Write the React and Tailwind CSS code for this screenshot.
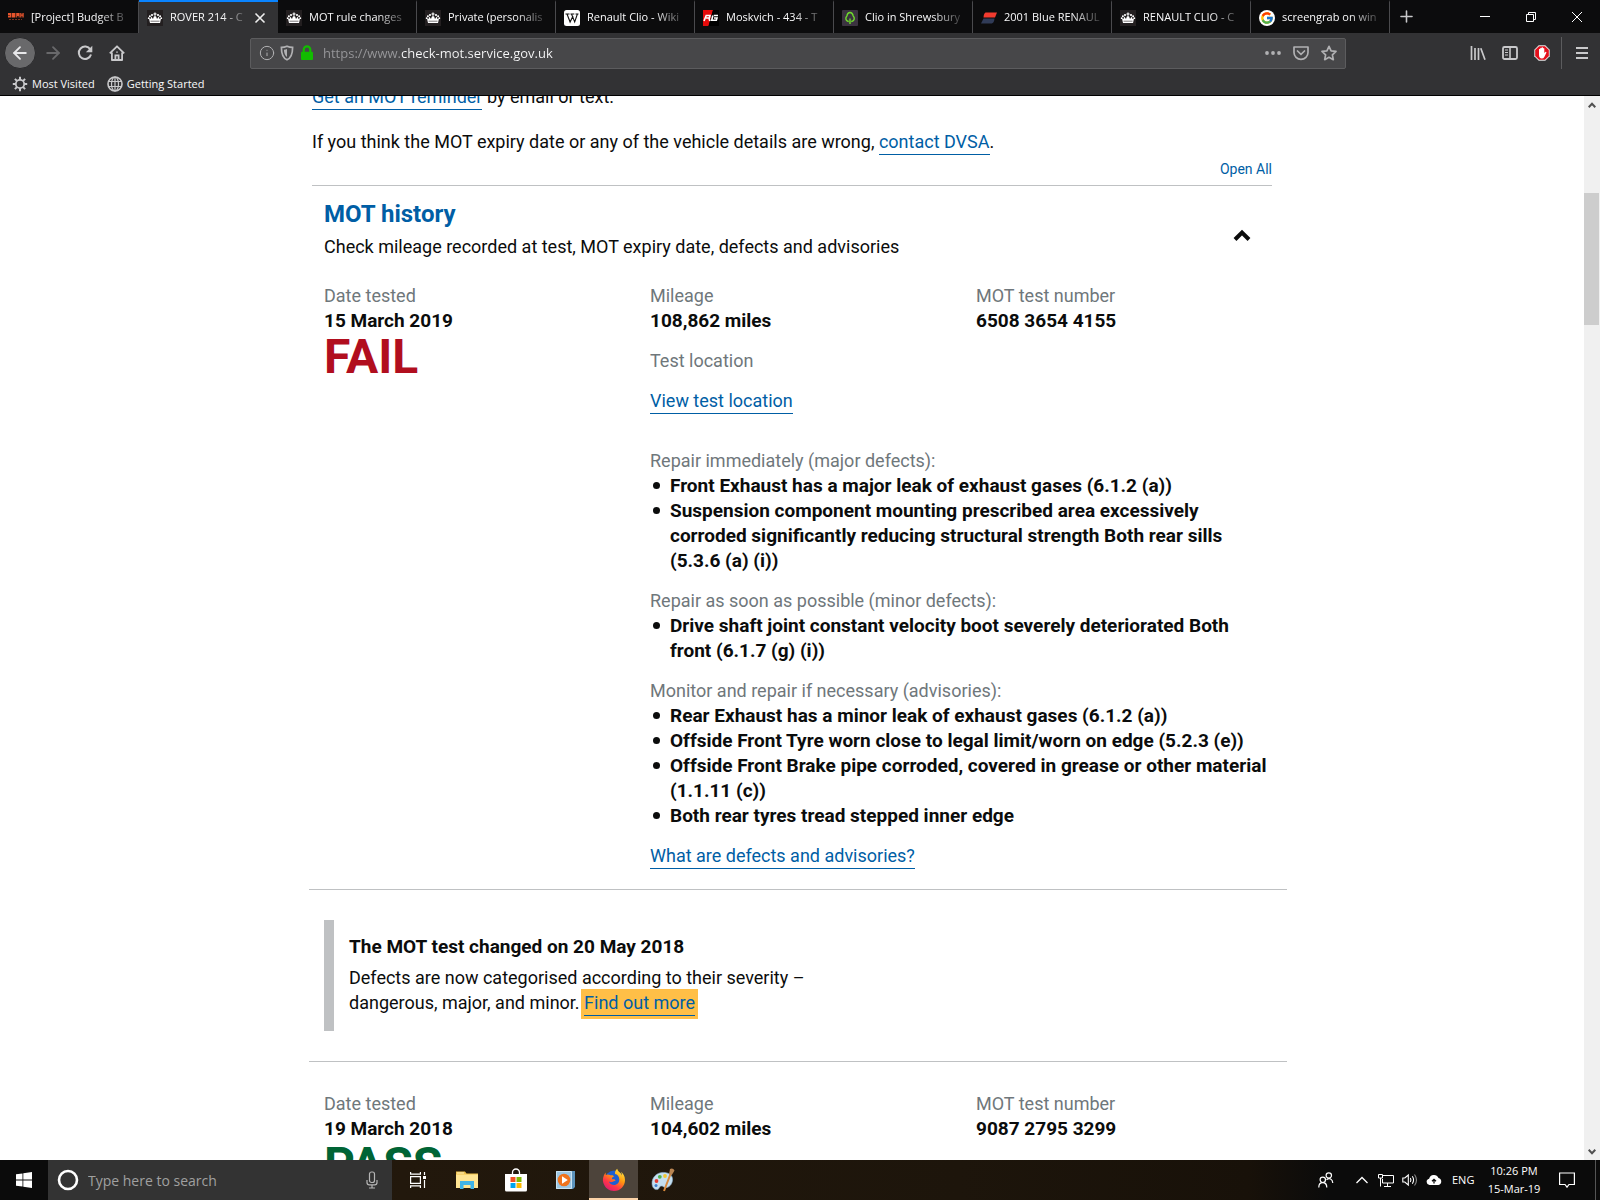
import { ArrowLeft, ArrowRight, Plus, Info } from 'lucide-react';
import { FcGoogle } from 'react-icons/fc';

const CrownIcon = () => (
	<svg viewBox="0 0 16 16" className="w-4 h-4 shrink-0">
		<path fill="#231f20" d="M0 0h16v16H0z" />
		<g fill="#fff">
			<path d="M7.4 2.6h1.2v1h1v1h-1v1.2H7.4V4.6h-1v-1h1z" />
			<circle cx="5" cy="5" r="1.100" />
			<circle cx="11" cy="5" r="1.100" />
			<circle cx="2.900" cy="6.200" r="1" />
			<circle cx="13.100" cy="6.200" r="1" />
			<circle cx="1.700" cy="8.200" r=".9" />
			<circle cx="14.300" cy="8.200" r=".9" />
			<path d="M2 8.400 3.600 9l.5-2.600L6 9l1-2.800h2L10 9l1.900-2.600.5 2.600 1.600-.6-1 4.600H3z" />
		</g>
		<path stroke="#231f20" strokeWidth=".6" d="M3.500 11.200h9" />
	</svg>
);

const ProjectIcon = () => (
	<svg viewBox="0 0 16 16" className="w-4 h-4 shrink-0">
		<g fill="#e8552d">
			<path d="M0 3h3.4v4.5H0V6h2v-.5H0zM4 3h3.4v4.5H4zM8.2 3h3.4v4.5h-1V6H9.2v1.5h-1zM12.2 3h1.2v1.6h1V3h1.300v4.500h-1.300V5.800h-1v1.700h-1.200z" />
		</g>
		<path stroke="#7a3320" strokeWidth="1" strokeDasharray="2 1" d="M1 9.500h13" />
	</svg>
);

const WikiIcon = () => (
	<svg viewBox="0 0 16 16" className="w-4 h-4 shrink-0">
		<rect width="16" height="16" rx="2.500" fill="#fff" />
		<path d="M1.500 4h4M6.500 4h3.800M11.500 4h3M3 4l3.100 8L9 6M7.500 4l3.200 8L13.400 4" fill="none" stroke="#111" strokeWidth="1.100" />
	</svg>
);

const MoskvichIcon = () => (
	<svg viewBox="0 0 16 16" className="w-4 h-4 shrink-0">
		<path fill="#e60b0b" d="M0 0h10L5.500 16H0z" />
		<path fill="#000" d="M10 0h6v16H5.500z" />
		<path d="m1 11 2.200-5.500H7L6.400 8H3M6 8l.8 3M10.800 5.500H15M9.800 5.500 8.700 10.300h4.600L14 8h-3" fill="none" stroke="#fff" strokeWidth="1.600" />
	</svg>
);

const TreeIcon = () => (
	<svg viewBox="0 0 16 16" className="w-4 h-4 shrink-0">
		<rect width="16" height="16" rx="1" fill="#3b3340" />
		<path d="M8 14V8.500M6.800 11.500c-2-.4-3.300-1.800-2.900-3.600.2-1 .8-1.300 1-2C5.300 3.700 6.400 2.500 8 2.500s2.700 1.200 3.200 3.400c.2.7.8 1 1 2 .4 1.800-.9 3.200-3 3.600" fill="none" stroke="#6fdc2c" strokeWidth="1.400" />
	</svg>
);

const FlagIcon = () => (
	<svg viewBox="0 0 16 16" className="w-4 h-4 shrink-0">
		<path fill="#f23b2f" d="M4.500 2.500H16L14 7.500H2.500q.2-4 2-5z" />
		<path fill="#303b57" d="M2.500 8.500H13.500q-.4 4.500-2.800 5H0z" />
	</svg>
);

const tabs = [
	{ title: '[Project] Budget B', icon: <ProjectIcon /> },
	{ title: 'ROVER 214 - C', icon: <CrownIcon />, active: true },
	{ title: 'MOT rule changes', icon: <CrownIcon /> },
	{ title: 'Private (personalis', icon: <CrownIcon /> },
	{ title: 'Renault Clio - Wiki', icon: <WikiIcon /> },
	{ title: 'Moskvich - 434 - T', icon: <MoskvichIcon /> },
	{ title: 'Clio in Shrewsbury', icon: <TreeIcon /> },
	{ title: '2001 Blue RENAUL', icon: <FlagIcon /> },
	{ title: 'RENAULT CLIO - C', icon: <CrownIcon /> },
	{ title: 'screengrab on win', icon: <span className="w-4 h-4 shrink-0 rounded-full bg-white flex items-center justify-center"><FcGoogle size={ 14 } /></span> },
];

function TabStrip() {
	return (
		<div className="flex h-[33px] bg-[#0c0c0d]">
			{ tabs.map( ( tab ) => (
				<div
					key={ tab.title }
					className={ tab.active
						? 'flex items-center w-[139px] min-w-0 border-t-2 border-[#0a84ff] bg-[#323234] pl-2 pr-2'
						: 'flex items-center w-[139px] min-w-0 border-t-2 border-t-transparent border-r border-r-[#4a4a4d] pl-2 pr-1' }
				>
					<button type="button" className="flex flex-1 min-w-0 items-center gap-[7px] text-left">
						{ tab.icon }
						<span className="flex-1 min-w-0 overflow-hidden whitespace-nowrap text-[11px] font-[Open_Sans,sans-serif] text-[#f9f9fa] mask-r-from-65%">{ tab.title }</span>
					</button>
					{ tab.active && (
						<button type="button" aria-label="Close tab" className="w-5 h-5 flex items-center justify-center">
							<svg viewBox="0 0 12 12" className="w-3 h-3"><path d="m1.500 1.500 9 9M10.500 1.500l-9 9" stroke="#eee" strokeWidth="1.600" /></svg>
						</button>
					) }
				</div>
			) ) }
			<button type="button" aria-label="New tab" className="w-8 flex items-center justify-center text-[#c8c8ca]">
				<Plus size={ 19 } strokeWidth={ 2 } />
			</button>
			<div className="ml-auto flex">
				<button type="button" aria-label="Minimise" className="w-[46px] flex items-center justify-center">
					<svg viewBox="0 0 10 10" className="w-[10px] h-[10px]"><path d="M0 4.500h10" stroke="#fff" /></svg>
				</button>
				<button type="button" aria-label="Restore" className="w-[46px] flex items-center justify-center">
					<svg viewBox="0 0 10 10" className="w-[10px] h-[10px]" fill="none" stroke="#fff"><path d="M.5 2.500h7v7h-7zM2.500 2.500v-2h7v7h-2" /></svg>
				</button>
				<button type="button" aria-label="Close window" className="w-[46px] flex items-center justify-center">
					<svg viewBox="0 0 10 10" className="w-[10px] h-[10px]"><path d="m0 0 10 10M10 0 0 10" stroke="#fff" /></svg>
				</button>
			</div>
		</div>
	);
}

function NavBar() {
	return (
		<div className="flex h-10 items-center pl-1 text-[#c9c9cb]">
			<button type="button" aria-label="Back" className="w-8 h-8 rounded-full bg-[#69696b] border border-[#2a2a2c] flex items-center justify-center text-[#e8e8ea]">
				<ArrowLeft size={ 20 } strokeWidth={ 2.2 } />
			</button>
			<button type="button" aria-label="Forward" className="w-8 h-8 ml-px flex items-center justify-center text-[#69696b]">
				<ArrowRight size={ 20 } strokeWidth={ 2.2 } />
			</button>
			<button type="button" aria-label="Reload" className="w-8 h-8 flex items-center justify-center">
				<svg viewBox="0 0 16 16" className="w-4 h-4">
					<path d="M13.300 4.500A6.200 6.200 0 1 0 14 9.500" fill="none" stroke="currentColor" strokeWidth="2" />
					<path d="M15.300.8v6.400H8.900z" fill="currentColor" />
				</svg>
			</button>
			<button type="button" aria-label="Home" className="w-8 h-8 flex items-center justify-center">
				<svg viewBox="0 0 16 16" className="w-4 h-4" fill="none" stroke="currentColor" strokeWidth="1.800">
					<path d="M.8 8.300 8 1.300l7.200 7M2.900 7.500V15h10.200V7.500" strokeLinejoin="round" />
					<path d="M6.400 15v-4.700h3.200V15" />
					<path d="M7.200 6.600h1.600v1.200H7.200z" fill="currentColor" stroke="none" />
				</svg>
			</button>
			<div className="ml-[117px] mr-[124px] flex flex-1 h-[31px] items-center rounded-xs border border-[#5c5c5e] bg-[#474749] px-2 text-[#b1b1b3]">
				<Info size={ 16 } strokeWidth={ 1.5 } />
				<svg viewBox="0 0 16 16" className="ml-1 w-4 h-4">
					<path d="M8 1.200c2 .9 4 1.200 5.600 1.200 0 5.600-1 10.300-5.600 12.400C3.400 12.700 2.400 8 2.400 2.400 4 2.400 6 2.100 8 1.200z" fill="none" stroke="currentColor" strokeWidth="1.700" />
					<path d="M8 4v8C6 10.500 5 8 4.900 4.700 6 4.600 7 4.400 8 4z" fill="currentColor" />
				</svg>
				<svg viewBox="0 0 16 16" className="ml-1 w-4 h-4">
					<path d="M4.700 7V4.700a3.300 3.300 0 0 1 6.600 0V7" fill="none" stroke="#12bc00" strokeWidth="2.200" />
					<rect x="2" y="6.800" width="12" height="8.200" rx="1" fill="#12bc00" />
				</svg>
				<input
					type="text"
					aria-label="Address"
					defaultValue="https://www.check-mot.service.gov.uk"
					className="ml-2 pt-px flex-1 min-w-0 outline-none text-[13px] font-[Open_Sans,sans-serif] text-transparent bg-clip-text bg-[linear-gradient(90deg,#98989b_78px,#f9f9fa_78px)]"
				/>
				<div className="flex items-center gap-3">
					<svg viewBox="0 0 16 16" className="w-4 h-4" fill="currentColor"><circle cx="2" cy="8" r="1.900" /><circle cx="8" cy="8" r="1.900" /><circle cx="14" cy="8" r="1.900" /></svg>
					<svg viewBox="0 0 16 16" className="w-4 h-4" fill="none" stroke="currentColor" strokeWidth="1.700">
						<path d="M1 2h14v5.500a7 6.800 0 0 1-14 0z" strokeLinejoin="round" />
						<path d="M4.500 6 8 9.300 11.500 6" strokeLinecap="round" />
					</svg>
					<svg viewBox="0 0 16 16" className="w-4 h-4" fill="none" stroke="currentColor" strokeWidth="1.700" strokeLinejoin="round">
						<path d="m8 1.300 2.100 4.500 4.900.6-3.600 3.400.9 4.900L8 12.300l-4.300 2.400.9-4.900L1 6.400l4.900-.6z" />
					</svg>
				</div>
			</div>
			<div className="flex items-center gap-4 pr-[10px]">
				<svg viewBox="0 0 16 16" className="w-4 h-4" fill="none" stroke="currentColor" strokeWidth="1.700">
					<path d="M1.500 1v14M5 3v12M8.500 3v12M10.800 3.200l4.200 11.600" />
				</svg>
				<svg viewBox="0 0 16 16" className="w-4 h-4" fill="none" stroke="currentColor">
					<rect x="1" y="2" width="14" height="12" rx="1.500" strokeWidth="1.800" />
					<path d="M8 2v12" strokeWidth="1.600" />
					<path d="M3 5h3M3 7.500h3M3 10h3" strokeWidth="1" />
				</svg>
				<svg viewBox="0 0 16 16" className="w-4 h-4">
					<path d="M4.700.3h6.600l4.400 4.400v6.600l-4.400 4.400H4.700L.3 11.300V4.700z" fill="#e8e8e8" />
					<path d="M5.100 1.200h5.800l3.900 3.900v5.800l-3.900 3.900H5.100l-3.900-3.900V5.100z" fill="#e40f1b" />
					<path d="M5 6.500V4.300q.6-.9 1.200 0V3.200q.7-.9 1.400 0v-.6q.7-.9 1.400 0v.8q.7-.7 1.300.1V8l1.300-1.200q1 0 .8 1L10.300 12q-.7 1.500-2.600 1.500Q5 13.300 5 10z" fill="#fff" />
				</svg>
				<div className="flex items-center gap-3 -ml-[5px]">
					<span className="w-px h-8 bg-[#5c5c5e]" />
					<svg viewBox="0 0 16 16" className="w-4 h-4" stroke="currentColor" strokeWidth="2"><path d="M2 3h12M2 8h12M2 13h12" /></svg>
				</div>
			</div>
		</div>
	);
}

function BookmarkBar() {
	return (
		<div className="flex h-[22px] items-center gap-3 pl-3 text-[11px] font-[Open_Sans,sans-serif] text-[#f9f9fa]">
			<a href="#most-visited" className="flex items-center gap-1">
				<svg viewBox="0 0 16 16" className="w-4 h-4" fill="none" stroke="#c9c9cb">
					<circle cx="8" cy="8" r="4.200" strokeWidth="1.800" />
					<path d="M8 .8V4M8 12v3.200M.8 8H4M12 8h3.200M2.900 2.900l2.200 2.200M10.900 10.900l2.200 2.200M2.900 13.100l2.200-2.200M10.900 5.100l2.200-2.200" strokeWidth="2" />
				</svg>
				Most Visited
			</a>
			<a href="#getting-started" className="flex items-center gap-1">
				<svg viewBox="0 0 16 16" className="w-4 h-4" fill="none" stroke="#c9c9cb" strokeWidth="1.200">
					<circle cx="8" cy="8" r="7" strokeWidth="1.600" />
					<ellipse cx="8" cy="8" rx="3.500" ry="7" />
					<path d="M8 1v14M1.500 5.500h13M1.500 10.500h13" />
				</svg>
				Getting Started
			</a>
		</div>
	);
}

const TextLink = ( { children, className = '' } ) => (
	<a href="#details" className={ `text-[#005ea5] border-b border-[#005ea5] pb-[2px] ${ className }` }>{ children }</a>
);

function Field( { label, value } ) {
	return (
		<div>
			<dt className="text-[#6f777b]">{ label }</dt>
			<dd className="text-[19px] font-bold">{ value }</dd>
		</div>
	);
}

function DefectList( { title, items } ) {
	return (
		<section>
			<h3 className="text-[#6f777b]">{ title }</h3>
			<ul className="text-[19px] font-bold">
				{ items.map( ( item ) => (
					<li key={ item } className="flex pl-[3px] before:mt-[9px] before:mr-[10px] before:size-[7px] before:shrink-0 before:rounded-full before:bg-[#0b0c0c]">
						{ item }
					</li>
				) ) }
			</ul>
		</section>
	);
}

const majorDefects = [
	'Front Exhaust has a major leak of exhaust gases (6.1.2 (a))',
	'Suspension component mounting prescribed area excessively corroded significantly reducing structural strength Both rear sills (5.3.6 (a) (i))',
];
const minorDefects = [
	'Drive shaft joint constant velocity boot severely deteriorated Both front (6.1.7 (g) (i))',
];
const advisories = [
	'Rear Exhaust has a minor leak of exhaust gases (6.1.2 (a))',
	'Offside Front Tyre worn close to legal limit/worn on edge (5.2.3 (e))',
	'Offside Front Brake pipe corroded, covered in grease or other material (1.1.11 (c))',
	'Both rear tyres tread stepped inner edge',
];

function TestSummary( { date, result, resultClass, mileage, number, children } ) {
	return (
		<div className="grid grid-cols-3">
			<div className="px-[15px]">
				<dl><Field label="Date tested" value={ date } /></dl>
				<p className={ `text-5xl leading-[48px] font-bold ${ resultClass }` }>{ result }</p>
			</div>
			<div className="col-span-2">
				<dl className="grid grid-cols-2">
					<div className="px-[15px]"><Field label="Mileage" value={ mileage } /></div>
					<div className="px-[15px]"><Field label="MOT test number" value={ number } /></div>
				</dl>
				{ children }
			</div>
		</div>
	);
}

function Page() {
	return (
		<main className="flex-1 min-w-0 overflow-hidden bg-white text-[#0b0c0c] font-[Roboto,sans-serif] text-lg leading-[25px]">
			<div className="max-w-[960px] mx-auto -mt-3">
				<p><TextLink>Get an MOT reminder</TextLink> by email or text.</p>
				<p className="mt-5">If you think the MOT expiry date or any of the vehicle details are wrong, <TextLink>contact DVSA</TextLink>.</p>
				<div className="flex justify-end pt-[5px] pb-[6px] border-b border-[#bfc1c3]">
					<button type="button" className="text-sm text-[#005ea5]">Open All</button>
				</div>
				<div className="-ml-[3px] -mr-[15px]">
					<div className="flex items-center justify-between pt-[13px] pl-[15px] pr-9">
						<div>
							<h2 className="text-2xl leading-[30px] font-bold text-[#005ea5]">MOT history</h2>
							<p className="mt-[5px]">Check mileage recorded at test, MOT expiry date, defects and advisories</p>
						</div>
						<button type="button" aria-label="Collapse MOT history" className="pt-3">
							<svg viewBox="0 0 18 12" className="w-[18px] h-3" fill="none" stroke="#0b0c0c" strokeWidth="4"><path d="m2 10.500 7-7 7 7" /></svg>
						</button>
					</div>

					<div className="mt-6 pb-[21px] border-b border-[#bfc1c3]">
						<TestSummary date="15 March 2019" result="FAIL" resultClass="text-[#b10e1e]" mileage="108,862 miles" number="6508 3654 4155">
							<div className="px-[15px] pt-[15px]">
								<p className="text-[#6f777b]">Test location</p>
								<p className="mt-[15px]"><TextLink>View test location</TextLink></p>
								<div className="mt-[35px] flex flex-col gap-[15px]">
									<DefectList title="Repair immediately (major defects):" items={ majorDefects } />
									<DefectList title="Repair as soon as possible (minor defects):" items={ minorDefects } />
									<DefectList title="Monitor and repair if necessary (advisories):" items={ advisories } />
									<p><TextLink>What are defects and advisories?</TextLink></p>
								</div>
							</div>
						</TestSummary>
					</div>

					<div className="py-[30px] px-[15px] border-b border-[#bfc1c3]">
						<div className="border-l-[10px] border-[#bfc1c3] px-[15px] pt-[14px] pb-4">
							<h3 className="text-[19px] font-bold">The MOT test changed on 20 May 2018</h3>
							<p className="mt-[6px] max-w-[490px]">
								Defects are now categorised according to their severity – dangerous, major, and minor.{ ' ' }
								<TextLink className="bg-[#ffbf47] outline-3 outline-[#ffbf47]">Find out more</TextLink>
							</p>
						</div>
					</div>

					<div className="pt-[29px]">
						<TestSummary date="19 March 2018" result="PASS" resultClass="text-[#006435]" mileage="104,602 miles" number="9087 2795 3299" />
					</div>
				</div>
			</div>
		</main>
	);
}

function ScrollBar() {
	return (
		<div className="w-4 flex flex-col bg-[#f0f0f0]">
			<button type="button" aria-label="Scroll up" className="h-[17px] flex items-center justify-center">
				<svg viewBox="0 0 8 6" className="w-2 h-[6px]" fill="none" stroke="#505050" strokeWidth="2"><path d="m.7 5.200 3.300-3.500 3.300 3.500" /></svg>
			</button>
			<div className="flex-1"><div className="mt-20 mr-px h-[132px] bg-[#cdcdcd]" /></div>
			<button type="button" aria-label="Scroll down" className="h-[17px] flex items-center justify-center">
				<svg viewBox="0 0 8 6" className="w-2 h-[6px]" fill="none" stroke="#505050" strokeWidth="2"><path d="m.7.8 3.300 3.500L7.300.8" /></svg>
			</button>
		</div>
	);
}

const TaskViewIcon = () => (
	<svg viewBox="0 0 18 16" className="w-[18px] h-4" fill="none" stroke="#fff" strokeWidth="1.200">
		<path d="M1.600 4.600h9.800v6.800H1.600zM1.600 0v2.200h9.800V0M1.600 16v-2.200h9.800V16M15.500 0v3M15.500 8v8" />
		<path d="M14 4h3v3h-3z" fill="#fff" stroke="none" />
	</svg>
);

const ExplorerIcon = () => (
	<svg viewBox="0 0 24 20" className="w-6 h-5">
		<path fill="#f0c14b" d="M1 1.500h9l1.500 2H23V18H1z" />
		<path fill="#ffe593" d="M1 4.500h22V18H1z" />
		<path fill="#fff3c4" d="M2 2.500h7v1H2z" />
		<path fill="#3fb4e8" d="M5 11h14v8h-3.500v-4h-7v4H5z" />
	</svg>
);

const StoreIcon = () => (
	<svg viewBox="0 0 24 24" className="w-6 h-6">
		<path d="M8.500 6V4.500a3.500 3.500 0 0 1 7 0V6" fill="none" stroke="#fff" strokeWidth="1.300" />
		<path d="M1 6h22v16q0 1.500-1.500 1.500h-19Q1 23.500 1 22z" fill="#fff" />
		<path fill="#f25022" d="M6.500 9h5v5h-5z" />
		<path fill="#7fba00" d="M12.500 9h5v5h-5z" />
		<path fill="#00a4ef" d="M6.500 15h5v5h-5z" />
		<path fill="#ffb900" d="M12.500 15h5v5h-5z" />
	</svg>
);

const PlayerIcon = () => (
	<svg viewBox="0 0 20 20" className="w-5 h-5">
		<path fill="#5b93bd" d="M4 1h16v16l-2 2H6z" />
		<path fill="#9cc7e4" d="M1 1h15.500v18H1z" />
		<path fill="none" stroke="#c9e3f4" d="M1.500 1.500h15v17h-15z" />
		<circle cx="9" cy="10" r="6.300" fill="#f0731d" />
		<path fill="#fff" d="M7 6.200v7.600l5.800-3.800z" />
	</svg>
);

const FirefoxIcon = () => (
	<svg viewBox="0 0 24 24" className="w-6 h-6">
		<defs>
			<linearGradient id="fox" x1=".85" y1="0" x2=".2" y2="1">
				<stop offset="0" stopColor="#fff04a" />
				<stop offset=".4" stopColor="#ff980e" />
				<stop offset=".7" stopColor="#ff3647" />
				<stop offset="1" stopColor="#d51a7a" />
			</linearGradient>
		</defs>
		<circle cx="12" cy="11.500" r="9" fill="#1c5fd0" />
		<path d="M3.500 4.500C.8 8 .5 12 1.300 14.800 3 20 7 23 12 23c6.500 0 11-5 11-11 0-4-2-6.700-4-8.300.8 1.700 1 2.800 1 3.800C18.500 4 15.500 3.700 15.300.8c-2.200 1.500-2.500 4-2.300 5.200 2.500.3 4.300 2.500 4.300 5.500 0 3.200-2.300 5.500-5.300 5.500-2.500 0-4.500-1.300-5-3.500 1.500 1 3 .8 4.200 0 1-.6 1.800-.7 2.300-.8-.3-1.400-1.500-1.700-3.500-1.500-.3-1.300.5-2 2-2.700-.5-1.300-2-1.500-3.500-1.300C6.800 6.500 5.500 6 3.800 7z" fill="url(#fox)" />
	</svg>
);

const PaintIcon = () => (
	<svg viewBox="0 0 24 24" className="w-6 h-6">
		<path fill="#c5dff0" stroke="#86aac4" strokeWidth=".6" d="M11 4.500C5 5 .8 10 1 15.500c.2 4.500 3 6.500 5.500 6 2-.4 1.500-3 3.500-3.500 2.500-.5 3 2.500 6 1.500 3.500-1 6-5 5.500-9C21 6 16 4 11 4.500z" />
		<circle cx="5.500" cy="13" r="1.900" fill="#e33c32" />
		<circle cx="8.800" cy="8.800" r="1.900" fill="#4fb04a" />
		<circle cx="14" cy="8" r="1.900" fill="#f3c530" />
		<circle cx="5" cy="17.500" r="1.500" fill="#3c7fd0" />
		<path d="m13 23 6.500-17" stroke="#d98a3c" strokeWidth="2" />
		<path d="M18 6.500 19 1q3-1.300 4.500 1.500L20.800 7z" fill="#b98552" />
	</svg>
);

const pinned = [
	{ name: 'Task View', icon: <TaskViewIcon /> },
	{ name: 'File Explorer', icon: <ExplorerIcon /> },
	{ name: 'Microsoft Store', icon: <StoreIcon /> },
	{ name: 'Media Player', icon: <PlayerIcon /> },
	{ name: 'Firefox', icon: <FirefoxIcon />, active: true },
	{ name: 'Paint', icon: <PaintIcon /> },
];

function TaskBar() {
	return (
		<footer className="flex h-10 shrink-0 items-stretch bg-[linear-gradient(90deg,#0b0b0b_0%,#22180c_25%,#1d150b_60%,#181109_78%,#0b0b0b_83%)] font-[Open_Sans,sans-serif] text-white">
			<button type="button" aria-label="Start" className="w-12 flex items-center justify-center bg-[#0b0b0b]">
				<svg viewBox="0 0 16 16" className="w-4 h-4" fill="#fff"><path d="M0 2.300 6.500 1.400v6.200H0zM7.300 1.300 16 0v7.600H7.300zM0 8.400h6.500v6.200L0 13.700zM7.300 8.400H16V16l-8.700-1.300z" /></svg>
			</button>
			<div className="w-[344px] flex items-center bg-[#333] pl-[9px] pr-3">
				<svg viewBox="0 0 22 22" className="w-[22px] h-[22px]"><circle cx="11" cy="11" r="9" fill="none" stroke="#fff" strokeWidth="2.600" /></svg>
				<input type="text" aria-label="Search" placeholder="Type here to search" className="ml-[9px] pt-px flex-1 min-w-0 outline-none text-sm placeholder:text-[#a0a0a0]" />
				<svg viewBox="0 0 16 18" className="w-4 h-[18px]" fill="none" stroke="#b5b5b5" strokeWidth="1.200">
					<rect x="5.500" y="1" width="5" height="10.500" rx="2" />
					<path d="M3 9v2.500q0 2.300 2.300 2.300h5.400q2.300 0 2.300-2.300V9M8 14v3M5 17h6" />
				</svg>
			</div>
			<div className="flex pl-px">
				{ pinned.map( ( app ) => (
					<button
						key={ app.name }
						type="button"
						aria-label={ app.name }
						className={ app.active
							? 'w-[49px] flex items-center justify-center bg-[#4d443b] shadow-[inset_0_-2px_#fbd3a8]'
							: 'w-[49px] flex items-center justify-center' }
					>
						{ app.icon }
					</button>
				) ) }
			</div>
			<div className="ml-auto flex items-center">
				<svg viewBox="0 0 16 16" className="w-4 h-4 mr-5" fill="none" stroke="#fff" strokeWidth="1.200">
					<circle cx="10.800" cy="3.500" r="2.700" />
					<circle cx="4.800" cy="7.800" r="2.700" />
					<path d="M.8 15.500c0-6.400 8-6.400 8 0M8.500 7.700c3-2.400 6-.7 6.300 3.300" />
				</svg>
				<div className="flex items-center gap-2">
					<svg viewBox="0 0 16 16" className="w-4 h-4" fill="none" stroke="#fff" strokeWidth="1.300"><path d="m2.500 11 5.500-5.500L13.500 11" /></svg>
					<svg viewBox="0 0 16 16" className="w-4 h-4" fill="none" stroke="#fff">
						<path d="M5 3.500h10.500v7.500H4.500V7M9.500 11v3.500M6 14.500h7" />
						<path d="M.5 2.500h4v3.500h-4zM2.500 6v8.500" />
					</svg>
					<svg viewBox="0 0 16 16" className="w-4 h-4" fill="none" stroke="#fff" strokeWidth="1.100">
						<path d="M.8 6h2L6.300 3v10L2.800 10h-2zM8.300 6q1.300 2 0 4M10.300 4.300q2.600 3.700 0 7.400" />
						<path d="M12.500 2.500q4 5.500 0 11" stroke="#8a8a8a" />
					</svg>
					<svg viewBox="0 0 16 16" className="w-4 h-4">
						<path d="M3.500 13a3.200 3.200 0 0 1-.4-6.300A5 5 0 0 1 12.500 6a3.600 3.600 0 0 1 0 7z" fill="#fff" />
						<path d="M8 11.500V8M6 9.300 8 7.300l2 2" fill="none" stroke="#0b0b0b" strokeWidth="1.300" />
					</svg>
				</div>
				<span className="ml-[10px] w-6 text-[11px]">ENG</span>
				<div className="ml-2 w-[60px] text-center text-[11px] leading-[18px]">
					<div>10:26 PM</div>
					<div>15-Mar-19</div>
				</div>
				<button type="button" aria-label="Notifications" className="ml-[15px] mr-5">
					<svg viewBox="0 0 16 16" className="w-4 h-4" fill="none" stroke="#fff" strokeWidth="1.200"><path d="M.6 1h14.800v11.500H10L8 15.200l-2-2.700H.6z" /></svg>
				</button>
				<span className="h-full w-px mr-1 bg-[#555]" />
			</div>
		</footer>
	);
}

export default function App() {
	return (
		<div className="h-screen flex flex-col overflow-hidden">
			<header className="shrink-0 bg-[#323234] border-b border-black">
				<TabStrip />
				<NavBar />
				<BookmarkBar />
			</header>
			<div className="flex flex-1 min-h-0">
				<Page />
				<ScrollBar />
			</div>
			<TaskBar />
		</div>
	);
}
